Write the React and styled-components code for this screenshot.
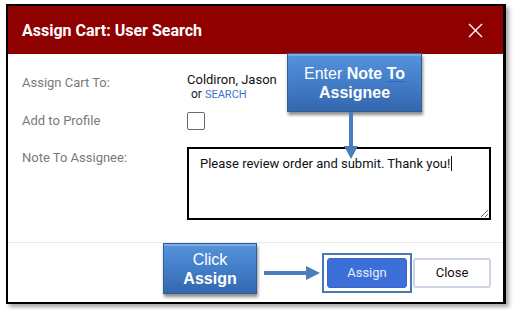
import React from "react";
import styled, { createGlobalStyle } from "styled-components";

const Global = createGlobalStyle`
  html, body { margin: 0; padding: 0; background: #ffffff; }
  body { font-family: Roboto, "Liberation Sans", Arial, sans-serif; }
  * { box-sizing: border-box; }
`;

const Page = styled.div`
  width: 516px;
  height: 310px;
  padding: 4px 0 0 6px;
  background: #ffffff;
`;

const Frame = styled.div`
  position: relative;
  width: 500px;
  height: 300px;
  border: 2px solid #000;
  border-right-width: 3px;
  background: #fff;
  box-shadow: 3px 3px 4px rgba(0, 0, 0, 0.35);
  display: flex;
  flex-direction: column;
`;

const Header = styled.div`
  height: 48px;
  background: #8f0000;
  display: flex;
  align-items: center;
  justify-content: space-between;
  padding: 0 20px 0 14px;
  flex-shrink: 0;
`;

const Title = styled.h1`
  margin: 0;
  font-family: Roboto, "Liberation Sans", sans-serif;
  font-size: 16px;
  font-weight: 700;
  color: #fff;
`;

const CloseIcon = styled.svg`
  width: 15px;
  height: 15px;
  display: block;
`;

const Body = styled.div`
  flex: 1;
  padding: 18px 12px 0 14px;
  display: flex;
  flex-direction: column;
`;

const Row = styled.div`
  display: grid;
  grid-template-columns: 165px 1fr;
  align-items: ${(p) => p.$align || "start"};
  margin-top: ${(p) => p.$gap || 0}px;
`;

const Label = styled.div`
  font-size: 13px;
  color: #7a7a7a;
  line-height: 16px;
  padding-top: ${(p) => p.$pt || 0}px;
`;

const Value = styled.div`
  font-size: 13px;
  color: #111;
  line-height: 15px;
`;

const OrLine = styled.div`
  font-size: 12px;
  line-height: 14px;
  color: #222;
  padding-left: 4px;
`;

const Link = styled.a`
  font-size: 11px;
  color: #3f72d4;
  text-transform: uppercase;
  text-decoration: none;
`;

const Checkbox = styled.span`
  display: block;
  width: 18px;
  height: 18px;
  border: 1px solid #6a6a6a;
  border-radius: 2px;
  background: #fff;
`;

const NoteWrap = styled.div`
  position: relative;
  width: 304px;
`;

const NoteArea = styled.textarea`
  display: block;
  width: 304px;
  height: 73px;
  border: 2px solid #000;
  padding: 7px 11px;
  font-family: Roboto, "Liberation Sans", sans-serif;
  font-size: 13px;
  line-height: 16px;
  color: #111;
  resize: both;
  outline: none;
  background: #fff;
`;

const Caret = styled.span`
  position: absolute;
  left: 264px;
  top: 9px;
  width: 1px;
  height: 15px;
  background: #111;
`;

const Footer = styled.div`
  height: 60px;
  border-top: 1px solid #e6e8ec;
  display: flex;
  justify-content: flex-end;
  align-items: center;
  padding: 0 12px 0 0;
  gap: 1px;
  flex-shrink: 0;
`;

const Highlight = styled.div`
  border: 2px solid #4a78b4;
  padding: 3px;
`;

const Button = styled.button`
  width: ${(p) => p.$w}px;
  height: 30px;
  border-radius: 3px;
  font-family: Roboto, "Liberation Sans", sans-serif;
  font-size: 13px;
  display: block;
  cursor: pointer;
  background: ${(p) => (p.$primary ? "#3d6fd9" : "#fff")};
  color: ${(p) => (p.$primary ? "#e6ecfb" : "#111")};
  border: ${(p) => (p.$primary ? "1px solid #3a66c6" : "2px solid #cdd4e5")};
`;

const Callout = styled.div`
  position: absolute;
  left: ${(p) => p.$x}px;
  top: ${(p) => p.$y}px;
  width: ${(p) => p.$w}px;
  height: ${(p) => p.$h}px;
  background: linear-gradient(#5592dc 0%, #4580cb 45%, #3467ae 100%);
  border: 1px solid #2f5d95;
  box-shadow: inset 0 2px 1px rgba(255, 255, 255, 0.25), 1px 3px 3px rgba(0, 0, 0, 0.45);
  display: flex;
  flex-direction: column;
  align-items: center;
  justify-content: center;
  font-family: "Liberation Sans", Arial, sans-serif;
  font-size: 16px;
  line-height: 19px;
  color: #fff;
  text-align: center;
  z-index: 2;
`;

const Strong = styled.b`
  font-weight: 700;
  text-decoration: ${(p) => (p.$ul ? "underline" : "none")};
  text-decoration-color: #2f62d0;
  text-underline-offset: 2px;
`;

const Arrow = styled.svg`
  position: absolute;
  left: ${(p) => p.$x}px;
  top: ${(p) => p.$y}px;
  z-index: 3;
  overflow: visible;
`;

export default function App() {
  return (
    <>
      <Global />
      <Page>
        <Frame>
          <Header>
            <Title>Assign Cart: User Search</Title>
            <CloseIcon viewBox="0 0 15 15">
              <path d="M1 1 L14 14 M14 1 L1 14" stroke="#fff" strokeWidth="1.4" fill="none" />
            </CloseIcon>
          </Header>
          <Body>
            <Row>
              <Label $pt={3}>Assign Cart To:</Label>
              <Value>
                Coldiron, Jason
                <OrLine>
                  or <Link href="#">Search</Link>
                </OrLine>
              </Value>
            </Row>
            <Row $align="center" $gap={10}>
              <Label>Add to Profile</Label>
              <Checkbox />
            </Row>
            <Row $gap={17}>
              <Label $pt={3}>Note To Assignee:</Label>
              <NoteWrap>
                <NoteArea readOnly defaultValue="Please review order and submit. Thank you!" />
                <Caret />
              </NoteWrap>
            </Row>
          </Body>
          <Footer>
            <Highlight>
              <Button $primary $w={80}>Assign</Button>
            </Highlight>
            <Button $w={78}>Close</Button>
          </Footer>

          <Callout $x={279} $y={47} $w={135} $h={59}>
            <div>
              Enter <Strong>Note <Strong $ul>To</Strong></Strong>
            </div>
            <div>
              <Strong>Assignee</Strong>
            </div>
          </Callout>
          <Arrow $x={336} $y={106} width="14" height="48" viewBox="0 0 14 48">
            <line x1="7" y1="0" x2="7" y2="36" stroke="#4a7ebb" strokeWidth="4" />
            <polygon points="0,34 14,34 7,47" fill="#4a7ebb" />
          </Arrow>

          <Callout $x={155} $y={237} $w={94} $h={51}>
            <div>Click</div>
            <div>
              <Strong>Assign</Strong>
            </div>
          </Callout>
          <Arrow $x={256} $y={260} width="58" height="14" viewBox="0 0 58 14">
            <line x1="0" y1="7" x2="44" y2="7" stroke="#4a7ebb" strokeWidth="4" />
            <polygon points="42,0 42,14 56,7" fill="#4a7ebb" />
          </Arrow>
        </Frame>
      </Page>
    </>
  );
}
